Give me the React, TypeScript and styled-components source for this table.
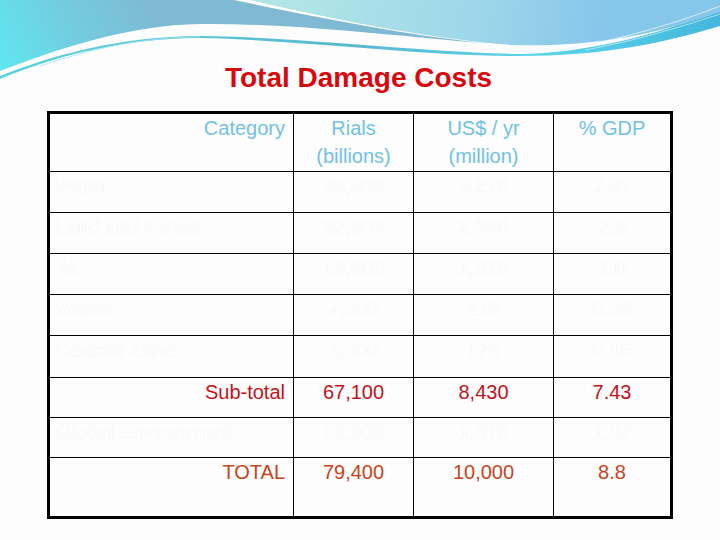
import styled, { createGlobalStyle } from 'styled-components';

const GlobalStyle = createGlobalStyle`
  * {
    box-sizing: border-box;
    margin: 0;
    padding: 0;
  }
  body {
    background: #fdfdfd;
    font-family: 'Liberation Sans', Arial, sans-serif;
  }
`;

const Slide = styled.div`
  position: relative;
  width: 720px;
  height: 540px;
  overflow: hidden;
  background: #fdfdfd;
`;

const Wave = styled.svg`
  position: absolute;
  top: 0;
  left: 0;
  width: 720px;
  height: 110px;
`;

const Content = styled.div`
  position: relative;
  display: flex;
  flex-direction: column;
  padding: 62px 0 0 47px;
`;

const Title = styled.h1`
  width: 623px;
  height: 49px;
  text-align: center;
  font-size: 28px;
  line-height: 32px;
  font-weight: bold;
  color: #d8080f;
`;

const Table = styled.table`
  width: 623px;
  table-layout: fixed;
  border-collapse: collapse;
  border: 3px solid #000;
`;

type Tone = 'head' | 'ghost' | 'sub' | 'total';

const colors: Record<Tone, string> = {
  head: '#6fc2e5',
  ghost: '#ffffff',
  sub: '#c4111b',
  total: '#c9431b',
};

const Cell = styled.td<{ $align: 'left' | 'center' | 'right'; $tone: Tone; $h: number }>`
  height: ${(p) => p.$h}px;
  border: 1px solid #000;
  vertical-align: top;
  text-align: ${(p) => p.$align};
  padding: 0 ${(p) => (p.$align === 'right' ? '8px' : '0')} 0 ${(p) => (p.$align === 'left' ? '6px' : '0')};
  font-size: 20px;
  line-height: 28px;
  color: ${(p) => colors[p.$tone]};
  text-shadow: ${(p) => (p.$tone === 'ghost' ? '0 0 1px rgba(0,0,0,0.1)' : 'none')};
  white-space: nowrap;
`;

const rows: { label: string; values: string[]; tone: Tone; h: number }[] = [
  { label: 'Water', values: ['35,300', '3,220', '2.82'], tone: 'ghost', h: 41 },
  { label: 'Land and Forest', values: ['22,500', '2,340', '2.5'], tone: 'ghost', h: 41 },
  { label: 'Air', values: ['13,500', '1,310', '1.0'], tone: 'ghost', h: 41 },
  { label: 'Waste', values: ['4,200', '410', '0.38'], tone: 'ghost', h: 41 },
  { label: 'Coastal Zone', values: ['1,300', '170', '0.15'], tone: 'ghost', h: 42 },
  { label: 'Sub-total', values: ['67,100', '8,430', '7.43'], tone: 'sub', h: 40 },
  { label: 'Global Environment', values: ['12,300', '1,570', '1.37'], tone: 'ghost', h: 40 },
  { label: 'TOTAL', values: ['79,400', '10,000', '8.8'], tone: 'total', h: 60 },
];

const WaveArt = () => (
  <Wave viewBox="0 0 720 110">
    <defs>
      <linearGradient id="gs" gradientUnits="userSpaceOnUse" x1="0" y1="80" x2="150" y2="0">
        <stop offset="0" stopColor="#5ee8f1" />
        <stop offset="0.5" stopColor="#72cde0" />
        <stop offset="1" stopColor="#80b9d3" />
      </linearGradient>
      <linearGradient id="gp" gradientUnits="userSpaceOnUse" x1="300" y1="0" x2="600" y2="50">
        <stop offset="0" stopColor="#b0e4e6" />
        <stop offset="0.6" stopColor="#9dd6ea" />
        <stop offset="1" stopColor="#86c6ea" />
      </linearGradient>
      <linearGradient id="gc" gradientUnits="userSpaceOnUse" x1="0" y1="0" x2="720" y2="0">
        <stop offset="0" stopColor="#5bd3e0" />
        <stop offset="0.5" stopColor="#58b8cf" />
        <stop offset="0.75" stopColor="#5bd6ea" />
        <stop offset="1" stopColor="#44b6dc" />
      </linearGradient>
    </defs>
    <path d="M0,0 H720 V26 C660,44 600,56 520,56 C420,56 300,40 200,38 C120,38 50,58 0,79 Z" fill="url(#gc)" />
    <path d="M0,76 C50,56 120,36 200,36 C300,37 420,52 520,54 C580,53 650,38 720,10 V0 H0 Z" fill="#fdfdfd" />
    <path d="M0,71 C60,48 130,25 200,24 C300,23 410,38 505,45 C420,38 320,18 234,0 H0 Z" fill="url(#gs)" />
    <path d="M250,0 C320,16 420,38 512,45 C600,48 670,30 720,12 V0 Z" fill="url(#gp)" />
    <path d="M560,50 C620,40 680,22 720,6" stroke="#e8f8fb" strokeWidth="0.8" fill="none" />
    <path d="M585,50 C640,40 690,24 720,14" stroke="#e8f8fb" strokeWidth="0.6" fill="none" />
    <path d="M40,66 C100,46 150,37 200,37" stroke="#a8e6ee" strokeWidth="0.8" fill="none" />
  </Wave>
);

const App = () => {
  return (
    <>
      <GlobalStyle />
      <Slide>
        <WaveArt />
        <Content>
          <Title>Total Damage Costs</Title>
          <Table>
            <colgroup>
              <col style={{ width: 245 }} />
              <col style={{ width: 120 }} />
              <col style={{ width: 140 }} />
              <col style={{ width: 118 }} />
            </colgroup>
            <tbody>
              <tr>
                <Cell $align="right" $tone="head" $h={59}>Category</Cell>
                <Cell $align="center" $tone="head" $h={59}>
                  Rials
                  <br />
                  (billions)
                </Cell>
                <Cell $align="center" $tone="head" $h={59}>
                  US$ / yr
                  <br />
                  (million)
                </Cell>
                <Cell $align="center" $tone="head" $h={59}>% GDP</Cell>
              </tr>
              {rows.map((r) => (
                <tr key={r.label}>
                  <Cell
                    $align={r.tone === 'ghost' ? 'left' : 'right'}
                    $tone={r.tone}
                    $h={r.h}
                  >
                    {r.label}
                  </Cell>
                  {r.values.map((v, i) => (
                    <Cell key={i} $align="center" $tone={r.tone} $h={r.h}>
                      {v}
                    </Cell>
                  ))}
                </tr>
              ))}
            </tbody>
          </Table>
        </Content>
      </Slide>
    </>
  );
};

export default App;
